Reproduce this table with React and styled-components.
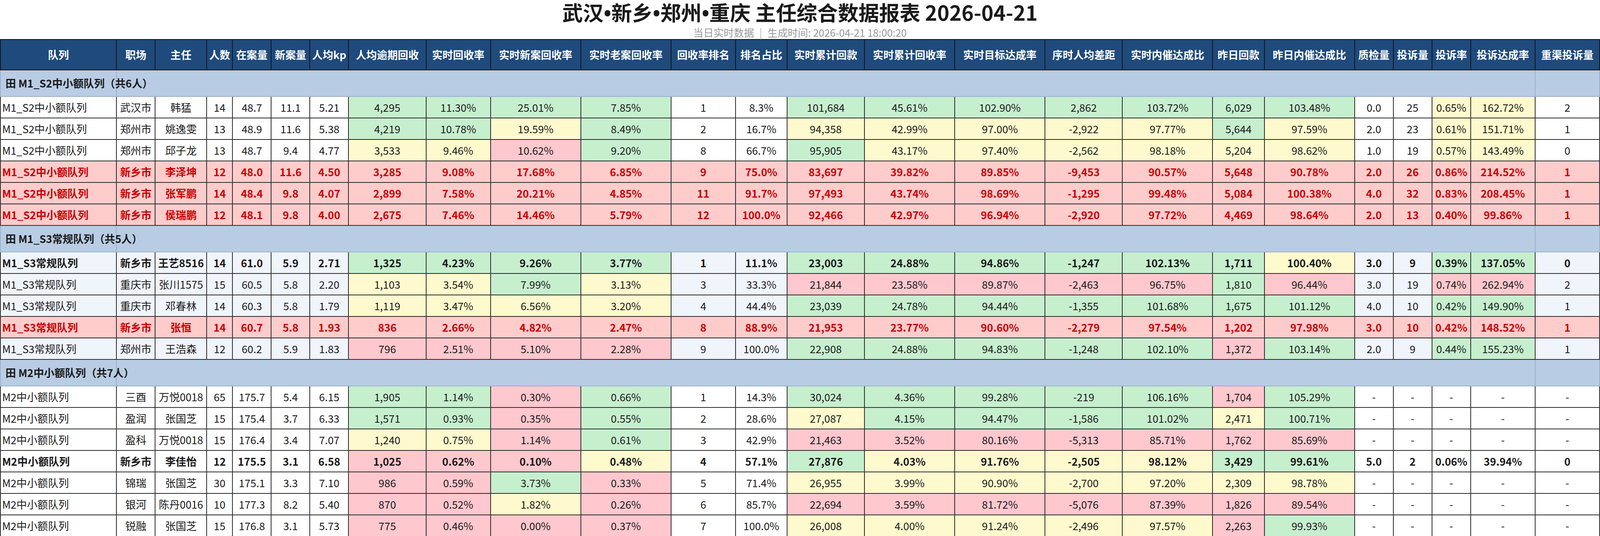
import React from 'react';
import styled, { createGlobalStyle } from 'styled-components';

const FONT = `"Noto Sans CJK SC", "Microsoft YaHei", "Noto Sans", sans-serif`;

// Design is 4800 x 1372: horizontal measures follow the viewport width,
// vertical measures follow the viewport height, type takes the mean of both.
const X = (px) => `${(px / 48).toFixed(4)}vw`;
const Y = (px) => `${(px / 13.72).toFixed(4)}vh`;
const F = (px) => `calc(${(px / 96).toFixed(4)}vw + ${(px / 27.44).toFixed(4)}vh)`;

const GlobalStyle = createGlobalStyle`
  html { overflow: hidden; }
  html, body { margin: 0; padding: 0; background: #ffffff; }
  body { font-family: ${FONT}; color: #1a1a1a; }
`;

const COLS = [9, 3, 4, 2, 3, 3, 3, 6, 5, 7, 7, 5, 4, 6, 7, 7, 6, 7, 4, 7, 3, 3, 3, 5, 5];
const TOTAL = COLS.reduce((a, b) => a + b, 0);

const HEADERS = [
  '队列', '职场', '主任', '人数', '在案量', '新案量', '人均kp', '人均逾期回收',
  '实时回收率', '实时新案回收率', '实时老案回收率', '回收率排名', '排名占比',
  '实时累计回款', '实时累计回收率', '实时目标达成率', '序时人均差距', '实时内催达成比',
  '昨日回款', '昨日内催达成比', '质检量', '投诉量', '投诉率', '投诉达成率', '重渠投诉量',
];

const TONES = { g: '#c6efce', y: '#fffacd', r: '#ffc7ce' };

// tone string: 25 chars, '.' = neutral, g/y/r = conditional colour
const GROUPS = [
  {
    name: 'M1_S2中小额队列',
    count: 6,
    alt: false,
    rows: [
      { t: '.......gggg..ggggggg..yy.', v: ['M1_S2中小额队列', '武汉市', '韩猛', '14', '48.7', '11.1', '5.21', '4,295', '11.30%', '25.01%', '7.85%', '1', '8.3%', '101,684', '45.61%', '102.90%', '2,862', '103.72%', '6,029', '103.48%', '0.0', '25', '0.65%', '162.72%', '2'] },
      { t: '.......ggyg..yyyyygy..yy.', v: ['M1_S2中小额队列', '郑州市', '姚逸雯', '13', '48.9', '11.6', '5.38', '4,219', '10.78%', '19.59%', '8.49%', '2', '16.7%', '94,358', '42.99%', '97.00%', '-2,922', '97.77%', '5,644', '97.59%', '2.0', '23', '0.61%', '151.71%', '1'] },
      { t: '.......yyrg..gyyyyyy..yy.', v: ['M1_S2中小额队列', '郑州市', '邱子龙', '13', '48.7', '9.4', '4.77', '3,533', '9.46%', '10.62%', '9.20%', '8', '66.7%', '95,905', '43.17%', '97.40%', '-2,562', '98.18%', '5,204', '98.62%', '1.0', '19', '0.57%', '143.49%', '0'] },
      { red: true, v: ['M1_S2中小额队列', '新乡市', '李泽坤', '12', '48.0', '11.6', '4.50', '3,285', '9.08%', '17.68%', '6.85%', '9', '75.0%', '83,697', '39.82%', '89.85%', '-9,453', '90.57%', '5,648', '90.78%', '2.0', '26', '0.86%', '214.52%', '1'] },
      { red: true, v: ['M1_S2中小额队列', '新乡市', '张军鹏', '14', '48.4', '9.8', '4.07', '2,899', '7.58%', '20.21%', '4.85%', '11', '91.7%', '97,493', '43.74%', '98.69%', '-1,295', '99.48%', '5,084', '100.38%', '4.0', '32', '0.83%', '208.45%', '1'] },
      { red: true, v: ['M1_S2中小额队列', '新乡市', '侯瑞鹏', '12', '48.1', '9.8', '4.00', '2,675', '7.46%', '14.46%', '5.79%', '12', '100.0%', '92,466', '42.97%', '96.94%', '-2,920', '97.72%', '4,469', '98.64%', '2.0', '13', '0.40%', '99.86%', '1'] },
    ],
  },
  {
    name: 'M1_S3常规队列',
    count: 5,
    alt: true,
    rows: [
      { bold: true, t: '.......gggg..ggggggy..gg.', v: ['M1_S3常规队列', '新乡市', '王艺8516', '14', '61.0', '5.9', '2.71', '1,325', '4.23%', '9.26%', '3.77%', '1', '11.1%', '23,003', '24.88%', '94.86%', '-1,247', '102.13%', '1,711', '100.40%', '3.0', '9', '0.39%', '137.05%', '0'] },
      { t: '.......yygy..rrrrrgr..rr.', v: ['M1_S3常规队列', '重庆市', '张川1575', '15', '60.5', '5.8', '2.20', '1,103', '3.54%', '7.99%', '3.13%', '3', '33.3%', '21,844', '23.58%', '89.87%', '-2,463', '96.75%', '1,810', '96.44%', '3.0', '19', '0.74%', '262.94%', '2'] },
      { t: '.......yyyy..ggggggg..gg.', v: ['M1_S3常规队列', '重庆市', '邓春林', '14', '60.3', '5.8', '1.79', '1,119', '3.47%', '6.56%', '3.20%', '4', '44.4%', '23,039', '24.78%', '94.44%', '-1,355', '101.68%', '1,675', '101.12%', '4.0', '10', '0.42%', '149.90%', '1'] },
      { red: true, v: ['M1_S3常规队列', '新乡市', '张恒', '14', '60.7', '5.8', '1.93', '836', '2.66%', '4.82%', '2.47%', '8', '88.9%', '21,953', '23.77%', '90.60%', '-2,279', '97.54%', '1,202', '97.98%', '3.0', '10', '0.42%', '148.52%', '1'] },
      { t: '.......rrrr..gggggrg..gg.', v: ['M1_S3常规队列', '郑州市', '王浩森', '12', '60.2', '5.9', '1.83', '796', '2.51%', '5.10%', '2.28%', '9', '100.0%', '22,908', '24.88%', '94.83%', '-1,248', '102.10%', '1,372', '103.14%', '2.0', '9', '0.44%', '155.23%', '1'] },
    ],
  },
  {
    name: 'M2中小额队列',
    count: 7,
    alt: false,
    rows: [
      { t: '.......ggrg..gggggrg.....', v: ['M2中小额队列', '三酉', '万悦0018', '65', '175.7', '5.4', '6.15', '1,905', '1.14%', '0.30%', '0.66%', '1', '14.3%', '30,024', '4.36%', '99.28%', '-219', '106.16%', '1,704', '105.29%', '-', '-', '-', '-', '-'] },
      { t: '.......ggrg..yggggyg.....', v: ['M2中小额队列', '盈润', '张国芝', '15', '175.4', '3.7', '6.33', '1,571', '0.93%', '0.35%', '0.55%', '2', '28.6%', '27,087', '4.15%', '94.47%', '-1,586', '101.02%', '2,471', '100.71%', '-', '-', '-', '-', '-'] },
      { t: '.......yyrg..rrrrrrr.....', v: ['M2中小额队列', '盈科', '万悦0018', '15', '176.4', '3.4', '7.07', '1,240', '0.75%', '1.14%', '0.61%', '3', '42.9%', '21,463', '3.52%', '80.16%', '-5,313', '85.71%', '1,762', '85.69%', '-', '-', '-', '-', '-'] },
      { bold: true, t: '.......rrry..gyyyygg.....', v: ['M2中小额队列', '新乡市', '李佳怡', '12', '175.5', '3.1', '6.58', '1,025', '0.62%', '0.10%', '0.48%', '4', '57.1%', '27,876', '4.03%', '91.76%', '-2,505', '98.12%', '3,429', '99.61%', '5.0', '2', '0.06%', '39.94%', '0'] },
      { t: '.......rrgr..yyyyyyy.....', v: ['M2中小额队列', '锦瑞', '张国芝', '30', '175.1', '3.3', '7.10', '986', '0.59%', '3.73%', '0.33%', '5', '71.4%', '26,955', '3.99%', '90.90%', '-2,700', '97.20%', '2,309', '98.78%', '-', '-', '-', '-', '-'] },
      { t: '.......rryr..rrrrrrr.....', v: ['M2中小额队列', '银河', '陈丹0016', '10', '177.3', '8.2', '5.40', '870', '0.52%', '1.82%', '0.26%', '6', '85.7%', '22,694', '3.59%', '81.72%', '-5,076', '87.39%', '1,826', '89.54%', '-', '-', '-', '-', '-'] },
      { t: '.......rrrr..yyyyyrg.....', v: ['M2中小额队列', '锐融', '张国芝', '15', '176.8', '3.1', '5.73', '775', '0.46%', '0.00%', '0.37%', '7', '100.0%', '26,008', '4.00%', '91.24%', '-2,496', '97.57%', '2,263', '99.93%', '-', '-', '-', '-', '-'] },
    ],
  },
];

const Page = styled.div`
  width: 100%;
`;

const ReportHeader = styled.header`
  height: ${Y(100)};
  display: flex;
  flex-direction: column;
  align-items: center;
`;

const Title = styled.h1`
  margin: 0;
  font-size: ${F(57)};
  line-height: ${Y(60)};
  font-weight: 700;
  color: #1a1a1a;
  white-space: nowrap;
`;

const Dot = styled.span`
  font-family: "Noto Sans", "Liberation Sans", sans-serif;
  font-weight: 700;
`;

const SubTitle = styled.div`
  margin-top: ${Y(4)};
  font-size: ${F(28)};
  line-height: ${Y(32)};
  color: #9a9a9a;
  white-space: nowrap;
`;

const Divider = styled.span`
  margin: 0 ${X(16)};
  color: #b5b5b5;
`;

const Table = styled.table`
  width: 100%;
  table-layout: fixed;
  border-collapse: collapse;
  font-family: ${FONT};
  font-size: ${F(29)};
`;

const Col = styled.col`
  width: ${(p) => (p.$w / TOTAL) * 100}%;
`;

const HeadRow = styled.tr`
  height: ${Y(78)};
`;

const HeadCell = styled.th`
  background: #1f4a7c;
  color: #ffffff;
  font-weight: 700;
  text-align: center;
  vertical-align: middle;
  border: 2px solid #151515;
  padding: 0 ${X(2)};
  white-space: nowrap;
  overflow: hidden;
`;

const GroupRow = styled.tr`
  height: ${Y(68)};
`;

const GroupCell = styled.td`
  background: #b8cce4;
  border: 2px solid #9db1cb;
  border-top-color: ${(p) => (p.$edge ? '#2b2b2b' : '#9db1cb')};
  padding: 0 0 0 ${X(14)};
  font-weight: 700;
  color: #1a1a1a;
  white-space: nowrap;
  overflow: visible;
  vertical-align: middle;
`;

const DataRow = styled.tr`
  height: ${Y(55)};
`;

const toneBg = (p) => {
  if (p.$red) return '#ffcccc';
  if (p.$tone && TONES[p.$tone]) return TONES[p.$tone];
  return p.$alt ? '#f0f4fb' : '#ffffff';
};

const Cell = styled.td`
  background: ${toneBg};
  color: ${(p) => (p.$red ? '#cc0000' : '#1a1a1a')};
  font-weight: ${(p) => (p.$red || p.$bold ? 700 : 400)};
  text-align: ${(p) => (p.$left ? 'left' : 'center')};
  padding: ${(p) => (p.$left ? `0 0 0 ${X(4)}` : `0 ${X(2)}`)};
  border: 2px solid #2b2b2b;
  vertical-align: middle;
  white-space: nowrap;
  overflow: hidden;
`;

function Group({ group }) {
  return (
    <>
      <GroupRow>
        <GroupCell $edge>田 {group.name}（共{group.count}人）</GroupCell>
        <GroupCell colSpan={COLS.length - 2} />
        <GroupCell $edge />
      </GroupRow>
      {group.rows.map((row, ri) => (
        <DataRow key={ri}>
          {row.v.map((val, ci) => (
            <Cell
              key={ci}
              $left={ci === 0}
              $red={row.red}
              $bold={row.bold}
              $alt={group.alt}
              $tone={row.t ? row.t[ci] : undefined}
            >
              {val}
            </Cell>
          ))}
        </DataRow>
      ))}
    </>
  );
}

export default function App() {
  return (
    <Page>
      <GlobalStyle />
      <ReportHeader>
        <Title>
          武汉<Dot>•</Dot>新乡<Dot>•</Dot>郑州<Dot>•</Dot>重庆 主任综合数据报表 2026-04-21
        </Title>
        <SubTitle>
          当日实时数据<Divider>|</Divider>生成时间: 2026-04-21 18:00:20
        </SubTitle>
      </ReportHeader>
      <Table>
        <colgroup>
          {COLS.map((w, i) => (
            <Col key={i} $w={w} />
          ))}
        </colgroup>
        <thead>
          <HeadRow>
            {HEADERS.map((h) => (
              <HeadCell key={h}>{h}</HeadCell>
            ))}
          </HeadRow>
        </thead>
        <tbody>
          {GROUPS.map((g) => (
            <Group key={g.name} group={g} />
          ))}
        </tbody>
      </Table>
    </Page>
  );
}
